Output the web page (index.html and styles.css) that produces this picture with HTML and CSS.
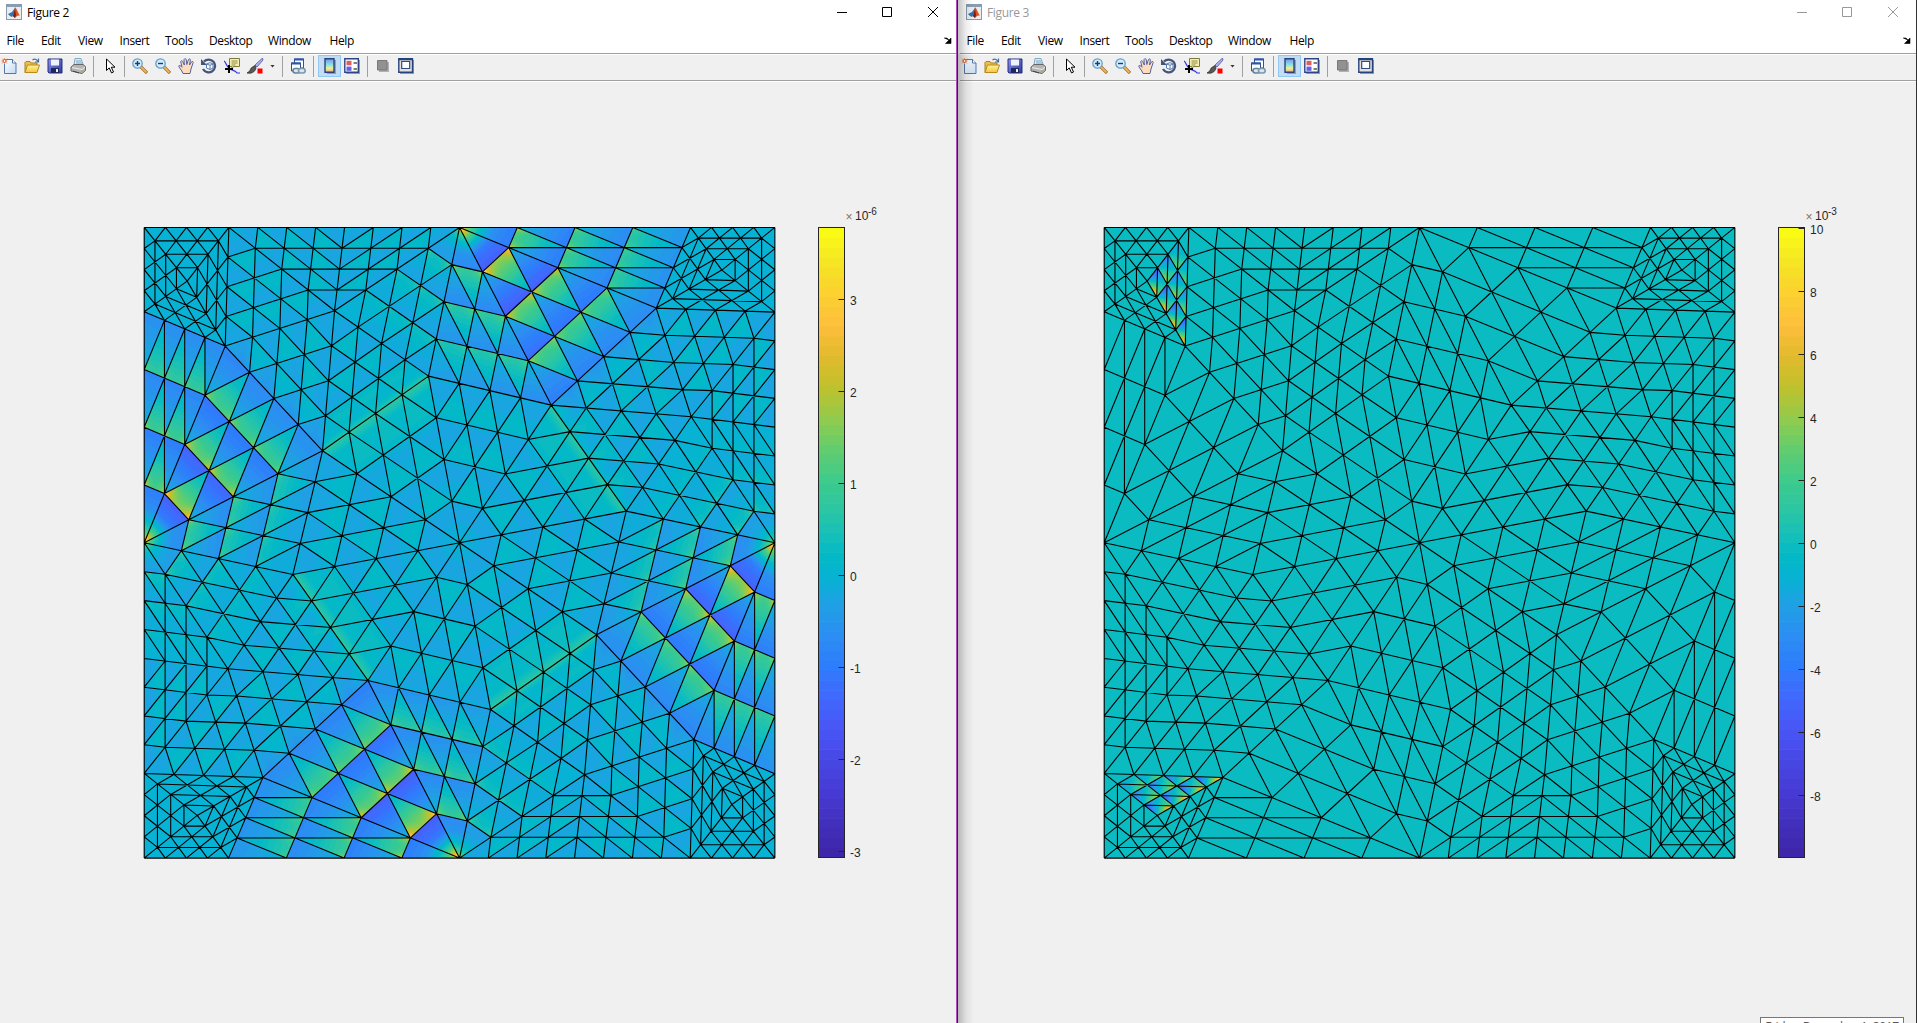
FILE: index.html
```html
<!DOCTYPE html>
<html lang="en">
<head>
<meta charset="utf-8">
<title>Figures</title>
<link rel="stylesheet" href="styles.css">
</head>
<body>
<svg class="defs" width="0" height="0">
<defs>
<linearGradient id="gPage" x1="0" y1="0" x2="1" y2="1"><stop offset="0" stop-color="#fff"/><stop offset="1" stop-color="#c3dbf3"/></linearGradient>
<linearGradient id="gFold" x1="0" y1="0" x2="0" y2="1"><stop offset="0" stop-color="#fff2a0"/><stop offset="1" stop-color="#f2c53d"/></linearGradient>
<linearGradient id="gSave" x1="0" y1="0" x2="1" y2="1"><stop offset="0" stop-color="#8d95ee"/><stop offset="1" stop-color="#2c3798"/></linearGradient>
<linearGradient id="gMap" x1="0" y1="0" x2="0" y2="1"><stop offset="0" stop-color="#8290e8"/><stop offset=".4" stop-color="#7fdfe6"/><stop offset=".7" stop-color="#eef09a"/><stop offset="1" stop-color="#f3a487"/></linearGradient>
</defs>
<symbol id="logo" viewBox="0 0 16 16"><rect x=".5" y=".5" width="15" height="15" fill="#e9edf1" stroke="#8b99a8"/><path d="M1 2h14" stroke="#7fa0c0" stroke-width="2"/><path d="M2 10l4-2 3-4 1 2-4 7-2-1z" fill="#2f74b5"/><path d="M9 3c2 2 3 6 5 9-2-1-3 0-5 2-1-1-2-2-3-2 2-2 2-6 3-9z" fill="#d9541e"/><path d="M9 5l1 6-1 3-2-2z" fill="#7b1f14"/></symbol>
<symbol id="new" viewBox="0 0 16 16"><path d="M3.500 1.500h8l3.500 3.500v10.500H3.500z" fill="url(#gPage)" stroke="#5577a8"/><path d="M11.500 1.500V5H15" fill="#fff" stroke="#5577a8"/><path d="M1 .5l5 5M6 .5L1 5.500M3.500 0v6M.5 3h6" stroke="#f09a66" stroke-width="1"/><circle cx="3.500" cy="3" r="1.500" fill="#fff" stroke="#d9532c"/></symbol>
<symbol id="open" viewBox="0 0 16 16"><path d="M1 14.500V4.500l1-1h4l1 1.500h6v2" fill="#e8c04b" stroke="#ad821c"/><path d="M1 14.500l2.500-7.500h12l-2.500 7.500z" fill="url(#gFold)" stroke="#b88a18"/><path d="M8.500 2c2-1.500 4-1 5.500 1.500M14.500.5v3.500h-3.500" fill="none" stroke="#466f9c" stroke-width="1.200"/></symbol>
<symbol id="save" viewBox="0 0 16 16"><path d="M1 1h14v14H2l-1-1z" fill="url(#gSave)" stroke="#27317d"/><path d="M4 1.500h8v6H4z" fill="#eef1ff"/><path d="M4 10h8v5H4z" fill="#1e265f"/><path d="M9 11h2v3H9z" fill="#eee"/></symbol>
<symbol id="print" viewBox="0 0 16 16"><path d="M4 7L5 .5h6l2 6" fill="#d7ebfa" stroke="#86a8bd"/><path d="M6 3h5M6 5h6" stroke="#79a9c7"/><path d="M1 9l3-2.500h9l2.500 2v4L12 15.500 1 13z" fill="#b5b5b5" stroke="#686868"/><path d="M2 9.500l10 2 3-2.500" fill="none" stroke="#eee"/><path d="M3 13l6 2" stroke="#444"/><path d="M11 13h2" stroke="#b7a13d"/></symbol>
<symbol id="cursor" viewBox="0 0 12 16"><path d="M1.500 1v11.500l2.700-2.600 2.300 5 2-.9-2.200-4.800H10z" fill="#fff" stroke="#000"/></symbol>
<symbol id="zin" viewBox="0 0 16 16"><path d="M9 9l6 6" stroke="#9b6a2c" stroke-width="3.200"/><path d="M9 9l5.500 5.500" stroke="#f0b354" stroke-width="1.800"/><circle cx="5.500" cy="5.500" r="4.700" fill="#cfeefc" stroke="#6d9bc4" stroke-width="1.300"/><path d="M3 5.500h5M5.500 3v5" stroke="#1b3c7a" stroke-width="1.400"/></symbol>
<symbol id="zout" viewBox="0 0 16 16"><path d="M9 9l6 6" stroke="#9b6a2c" stroke-width="3.200"/><path d="M9 9l5.500 5.500" stroke="#f0b354" stroke-width="1.800"/><circle cx="5.500" cy="5.500" r="4.700" fill="#cfeefc" stroke="#6d9bc4" stroke-width="1.300"/><path d="M3 5.500h5" stroke="#1b3c7a" stroke-width="1.400"/></symbol>
<symbol id="pan" viewBox="0 0 16 16"><path d="M5 15.500C4 12 .5 9.500.8 7.800c1-1 2.200.4 3.200 1.400L2.700 3.500c.7-1.300 1.700-.8 2 0L6.300 7 6 1.500c.7-1.200 1.900-1 2.200 0l.6 5L10.500 1.500c.8-1 1.800-.6 1.900.3L11.500 7l2-3.200c.9-.8 1.800-.2 1.700.7L13 11l-1 4.500z" fill="#ffdcbe" stroke="#40549b" stroke-width=".9"/></symbol>
<symbol id="rot" viewBox="0 0 16 16"><path d="M3 3.500A6.400 6.400 0 1 1 2 11" fill="none" stroke="#44557b" stroke-width="2.300"/><path d="M0 1v6h6z" fill="#44557b"/><path d="M5.500 6L9 4.700l3 1.300v4L9 11.500 5.500 10zM5.500 6L9 7.300 12 6M9 7.300v4" fill="#fff" stroke="#5a78ac"/></symbol>
<symbol id="tip" viewBox="0 0 16 16"><path d="M0 3c2 1 2 5 5 7 3 3 6 2 8 5l3 0" fill="none" stroke="#3333e0" stroke-width="1.200"/><path d="M5.500.5h10v8h-6L8 11V8.500H5.500z" fill="#f3efad" stroke="#7e7a3c"/><path d="M7.500 3h6M7.500 5h6M7.500 7h4" stroke="#8e8a52"/><path d="M1 11h8M5 7v8" stroke="#000" stroke-width="2"/></symbol>
<symbol id="brush" viewBox="0 0 17 16"><path d="M15.500 0L8 7l2 2 6-7z" fill="#aeb2f2" stroke="#4c54a0" stroke-width=".8"/><path d="M8 7.500L5.500 9C3 10 4 13 0 15c4 .8 8-.5 9-5z" fill="#5a5a55" stroke="#222" stroke-width=".7"/><path d="M10.500 10.500h5v5h-5z" fill="#f00"/></symbol>
<symbol id="link" viewBox="0 0 16 16"><path d="M4.500 1h9v9h-9z" fill="#fff" stroke="#334f8e"/><path d="M4 1.500h10" stroke="#2c55ad" stroke-width="2"/><path d="M1.500 5h9v8h-9z" fill="#fff" stroke="#334f8e"/><path d="M1 5.500h10" stroke="#2c55ad" stroke-width="2"/><rect x="3" y="10.500" width="7" height="4.500" rx="2.200" fill="#dbe6ee" stroke="#64809b" stroke-width="1.600"/><rect x="8.500" y="10.500" width="6.700" height="4.500" rx="2.200" fill="#dbe6ee" stroke="#7b97ae" stroke-width="1.600"/></symbol>
<symbol id="cbar" viewBox="0 0 12 16"><path d="M3 2h9v14H3z" fill="#8c9fb3"/><path d="M1 .8h9v13.500H1z" fill="url(#gMap)" stroke="#26437c" stroke-width="1.400"/></symbol>
<symbol id="legend" viewBox="0 0 16 16"><path d="M2 2h14v14H2z" fill="#8f9aa8"/><path d="M.8.8h13.500v13.500H.8z" fill="#fff" stroke="#2c4780" stroke-width="1.400"/><path d="M2.500 2.800h5v4.500h-5z" fill="#e45d5d"/><path d="M2.500 8.600h5v4.200h-5z" fill="#6262e6"/><path d="M9.500 5h3.500M9.500 11h3.500" stroke="#000" stroke-width="1.200"/></symbol>
<symbol id="hide" viewBox="0 0 12 12"><path d="M2 2h10v10H2z" fill="#b0b0b0"/><path d="M.5.5h9.500v9.500H.5z" fill="#919191" stroke="#787878"/></symbol>
<symbol id="dock" viewBox="0 0 16 16"><path d="M2 2h14v14H2z" fill="#8f9aa8"/><path d="M.8.8h13.700v13.500H.8z" fill="#e2e2da" stroke="#26437c" stroke-width="1.400"/><path d="M0 1.500h15" stroke="#26437c" stroke-width="1.600"/><path d="M3.700 3.500h8v7h-8z" fill="#fff" stroke="#2c4a88" stroke-width="1.200"/></symbol>
<symbol id="arrow" viewBox="0 0 8 7"><path d="M0 1h3l3 3M7 1v5.500H1.500L7 1z" fill="#000" stroke="#000" stroke-width=".6"/></symbol>
</svg>

<main class="desktop">
<section class="window active">
  <header class="title">
    <svg class="logo"><use href="#logo"/></svg><span class="caption">Figure 2</span>
    <svg class="controls" viewBox="0 0 102 12"><path d="M0 6.500h10M45.500 1.500h9v9h-9zM91 1l10 10M101 1L91 11"/></svg>
  </header>
  <nav class="menu"><span>File</span><span>Edit</span><span>View</span><span>Insert</span><span>Tools</span><span>Desktop</span><span>Window</span><span>Help</span><svg class="undock"><use href="#arrow"/></svg></nav>
  <div class="toolbar">
    <svg><use href="#new"/></svg><svg><use href="#open"/></svg><svg><use href="#save"/></svg><svg><use href="#print"/></svg><i class="sep"></i>
    <svg class="pick"><use href="#cursor"/></svg><i class="sep"></i>
    <svg><use href="#zin"/></svg><svg><use href="#zout"/></svg><svg><use href="#pan"/></svg><svg><use href="#rot"/></svg><svg><use href="#tip"/></svg><svg class="brush"><use href="#brush"/></svg><b class="drop"></b><i class="sep"></i>
    <svg><use href="#link"/></svg><i class="sep"></i>
    <span class="pressed"><svg><use href="#cbar"/></svg></span><svg><use href="#legend"/></svg><i class="sep"></i>
    <svg class="hide"><use href="#hide"/></svg><svg><use href="#dock"/></svg>
  </div>
  <div class="figure">
    <canvas class="plot" id="plot2" width="636" height="636"></canvas>
    <svg class="scale" id="scale2" width="80" height="670"></svg>
  </div>
</section>

<section class="window inactive">
  <header class="title">
    <svg class="logo"><use href="#logo"/></svg><span class="caption">Figure 3</span>
    <svg class="controls" viewBox="0 0 102 12"><path d="M0 6.500h10M45.500 1.500h9v9h-9zM91 1l10 10M101 1L91 11"/></svg>
  </header>
  <nav class="menu"><span>File</span><span>Edit</span><span>View</span><span>Insert</span><span>Tools</span><span>Desktop</span><span>Window</span><span>Help</span><svg class="undock"><use href="#arrow"/></svg></nav>
  <div class="toolbar">
    <svg><use href="#new"/></svg><svg><use href="#open"/></svg><svg><use href="#save"/></svg><svg><use href="#print"/></svg><i class="sep"></i>
    <svg class="pick"><use href="#cursor"/></svg><i class="sep"></i>
    <svg><use href="#zin"/></svg><svg><use href="#zout"/></svg><svg><use href="#pan"/></svg><svg><use href="#rot"/></svg><svg><use href="#tip"/></svg><svg class="brush"><use href="#brush"/></svg><b class="drop"></b><i class="sep"></i>
    <svg><use href="#link"/></svg><i class="sep"></i>
    <span class="pressed"><svg><use href="#cbar"/></svg></span><svg><use href="#legend"/></svg><i class="sep"></i>
    <svg class="hide"><use href="#hide"/></svg><svg><use href="#dock"/></svg>
  </div>
  <div class="figure">
    <canvas class="plot" id="plot3" width="636" height="636"></canvas>
    <svg class="scale" id="scale3" width="80" height="670"></svg>
  </div>
  <div class="shade"></div>
</section>
<div class="tooltip">Friday, December 1, 2017</div>
</main>
<script src="mesh.js"></script>
</body>
</html>
```
FILE: styles.css
```css
* { box-sizing: border-box; }
body { margin: 0; background: #f0f0f0; overflow: hidden; font-family: "Open Sans", "Noto Sans", sans-serif; font-size: 12px; color: #000; }
.defs { position: absolute; }
.desktop { position: relative; display: grid; grid-template-columns: 958px 959px; width: 1917px; height: 1023px; overflow: hidden; }
.window { position: relative; display: flex; flex-direction: column; background: #f0f0f0; min-width: 0; }
.active { border-right: 1px solid #34243c; }
.active::after { content: ""; position: absolute; top: 0; bottom: 0; right: 0; width: 1px; background: #b04cc0; }
.inactive { padding-left: 2px; border-right: 1px solid #333; }
.inactive::before { content: ""; position: absolute; left: 0; top: 0; width: 2px; height: 53px; background: #fff; }
.title { display: flex; align-items: center; height: 27px; padding: 0 18px 3px 6px; background: #fff; }
.inactive .title { padding-right: 17px; }
.logo { width: 16px; height: 16px; }
.caption { margin-left: 5px; letter-spacing: -0.35px; }
.controls { width: 102px; height: 12px; margin-left: auto; fill: none; stroke: #000; stroke-width: 1; }
.inactive .caption { color: #999; }
.inactive .controls { stroke: #999; }
.menu { display: grid; grid-template-columns: 34.5px 37px 41.5px 45.500px 44px 59px 61.500px 1fr 8px; align-items: center; height: 26px; padding: 0 5px 0 6.500px; background: #fff; letter-spacing: -0.4px; }
.undock { width: 8px; height: 7px; }
.toolbar { display: flex; align-items: center; height: 28px; padding: 0 0 2px 1px; gap: 7px; border-top: 1px solid #a0a0a0; border-bottom: 1px solid #a0a0a0; box-shadow: inset 0 1px #fff, 0 1px #fff; }
.toolbar svg { width: 16px; height: 16px; flex: none; }
.toolbar .sep { width: 1px; height: 21px; flex: none; background: #a0a0a0; }
.toolbar .pick { width: 12px; margin: 0 0 0 4px; }
.toolbar .brush { width: 17px; }
.drop { width: 5px; height: 3px; background: #333; clip-path: polygon(0 0, 100% 0, 50% 100%); margin: 0 0 0 -1px; }
.pressed { display: flex; align-items: center; justify-content: center; width: 23px; height: 22px; margin: 0 -4px 0 -3px; background: #c2dcf3; border: 1px solid #90c8f6; }
.toolbar .pressed svg { width: 12px; }
.toolbar .hide { width: 12px; height: 12px; margin: 0 2px 0 2px; }
.figure { display: flex; align-items: flex-start; padding: 119px 0 0 142px; flex: 1; }
.plot { margin-top: 25px; width: 636px; height: 636px; }
.scale { margin-left: 38px; font-family: "Liberation Sans", Arial, sans-serif; font-size: 12px; fill: #262626; overflow: visible; }
.shade { position: absolute; left: 0; top: 0; bottom: 0; width: 16px; background: linear-gradient(90deg, rgba(0,0,0,.24), rgba(0,0,0,.07) 50%, transparent); pointer-events: none; }
.tooltip { position: absolute; left: 1760px; top: 1017px; width: 144px; height: 22px; border: 1px solid #767676; background: #fff; color: #575757; text-align: center; white-space: nowrap; line-height: 18px; letter-spacing: -0.35px; }
```
FILE: mesh.js
```js
// Colour map anchors: position, red, green, blue.
const MAP = [[0,62,38,168],[.1,71,58,213],[.2,72,86,246],[.25,66,103,253],[.3,46,124,252],[.35,44,141,242],[.4,32,160,228],[.44,8,177,214],[.47,0,184,202],[.5,13,190,190],[.55,42,197,165],[.6,61,203,140],[.65,97,205,112],[.7,145,203,77],[.75,190,193,44],[.8,226,186,44],[.85,254,190,60],[.9,252,208,48],[.95,245,228,37],[1,249,251,20]];
function color(t) {
  t = Math.floor(Math.max(0, Math.min(0.9999, t)) * 64) / 63;
  let i = 1;
  while (i < MAP.length - 1 && MAP[i][0] < t) i++;
  const a = MAP[i - 1], b = MAP[i], k = (t - a[0]) / (b[0] - a[0]);
  return [1, 2, 3].map(j => Math.round(a[j] + (b[j] - a[j]) * k));
}

// Coarse mesh vertices in thirds of a pixel; a trailing "_" is the point mirrored through M.
const V = {
  A:[12,22], B:[266,22], C:[613,22], P:[958,22], Q:[1651,22], R:[1904,22],
  S:[12,275], L:[12,968], c:[141,183], D:[255,378], E:[583,272], F:[547,692],
  G:[865,468], H:[1233,555], I:[1548,264], d:[1745,150], J:[1653,590],
  K:[1458,873], T:[1904,276], U:[1904,621], M:[958,968]
};
for (const k of Object.keys(V)) V[k + "_"] = [1916 - V[k][0], 1936 - V[k][1]];
V.M_ = V.M; V.X = V.L_; V.X_ = V.L;
const half = "A B c,A S c,S D c,B D c,B D E,B C E,C P E,L S D,D E F,L D F,E F G,P E G,P G H,P Q I,P H I,Q R d,R T d,I T d,Q I d,I T J,H I J,J T U,X J U,H J K,X J K,M F G,M G H,M H K,M K F_,X K F_".split(",").map(s => s.split(" "));
const flip = n => n.endsWith("_") ? n.slice(0, -1) : n + "_";
const coarse = half.map(n => ({ n, key: n.join("") })).concat(half.map(n => ({ n: n.map(flip), key: n.join("") + "'" })));
const N = 4, OFFX = 2, OFFY = 5;
const px = p => [p[0] / 3 - OFFX + 0.2, p[1] / 3 - OFFY + 0.1];

// Wave strength in the triangles that touch a source: [gain, strength at 2nd vertex, at 3rd vertex].
const WAVE = { LDF:[.98,.75,.55], LSD:[.6,.55,.65], PHI:[1,.85,.6], PQI:[.62,.45,.6], PGH:[.45,.3,.65], PEG:[.22,.05,.3], LKF:[.45,.15,.45], LJK:[.22,.05,.15], LJU:[.2,.05,.1] };

// Position inside one cell of a subdivided triangle.
function cell(l) {
  const i = l.map(v => Math.min(3, Math.floor(4 * v)));
  const up = i[0] + i[1] + i[2] >= 3;
  return { up, i, r: l.map((v, k) => up ? 4 * v - i[k] : 1 - (4 * v - i[k])) };
}

function field2(tri, l) {
  const pair = tri.n.map(n => n.replace("_", "").replace("X", "L")).join("");
  const f = 4 * l[0] - Math.floor(Math.min(4 * l[0], 3.9999));
  const w = WAVE[pair], c = cell(l);
  if (w) {
    const near = l.reduce((s, v) => s + (4 * v - Math.round(4 * v)) ** 2, 0);
    const a = w[1] * l[1] + w[2] * l[2] + 1.9 * w[0] * l[0];
    // Cells pointing at the source fall off to blue, the cells between them rise to green.
    if (c.up && l[0] < .75) return .05 - a * 1.15 * (1 - f);
    const top = c.up ? Math.max(0, f - .35) * 1.5 : f;
    const kick = (.35 + 2.1 * l[0]) * Math.sqrt(w[0]) * Math.exp(-Math.sqrt(near) / .2) * (f > .5 ? 1 : 0);
    const dip = c.up ? .9 * a * (1 - f) : 0;
    return -.05 * (1 - f) + a * 1.08 * top + kick - dip;
  }
  if (/[cd]/.test(pair)) return -.04;
  let v = (c.up ? -.3 : .2) * (1 - Math.abs(c.r[0] - .3)) ** 2 + .02;
  if (pair === "MFG" || pair === "MHK") v += .7 * Math.exp(-l[0] * 8) * (c.up ? 1.3 : .6);
  if (pair === "EFG") v += .55 * Math.exp(-l[0] * 9) * (c.up ? 1.4 : .6);
  if (pair === "HJK") v += .35 * Math.exp(-l[1] * 12);
  if (pair === "HIJ") v -= .3 * Math.exp(-l[2] * 10);
  if (pair === "DEF") v -= .3 * Math.exp(-l[1] * 10);
  return v;
}

function field3(tri, l) {
  if (tri.key !== "BDc" && tri.key !== "ITd'") return 0;
  const top = tri.key === "BDc", c = cell(l);
  const start = top ? l[0] : l[1];
  if (start > .75) return 0;
  const [lo, hi] = top ? [c.r[0], c.r[1]] : [c.r[1], c.r[0]];
  const k = (c.up ? 3.5 + 7 * (1 - start) ** 3 : 4.2) * Math.min(1, (.85 - start) * 3.5);
  return k * (c.up ? hi - lo : lo - hi);
}

function draw(id, field, lo, hi) {
  const ctx = document.getElementById(id).getContext("2d");
  const img = ctx.createImageData(636, 636);
  for (const tri of coarse) {
    const [a, b, c] = tri.n.map(n => px(V[n]));
    const det = (b[1] - c[1]) * (a[0] - c[0]) + (c[0] - b[0]) * (a[1] - c[1]);
    const xs = [a[0], b[0], c[0]], ys = [a[1], b[1], c[1]];
    for (let y = Math.floor(Math.min(...ys)); y <= Math.max(...ys); y++)
      for (let x = Math.floor(Math.min(...xs)); x <= Math.max(...xs); x++) {
        const X = x + .5, Y = y + .5;
        const l0 = ((b[1] - c[1]) * (X - c[0]) + (c[0] - b[0]) * (Y - c[1])) / det;
        const l1 = ((c[1] - a[1]) * (X - c[0]) + (a[0] - c[0]) * (Y - c[1])) / det;
        const l2 = 1 - l0 - l1;
        if (l0 < -.004 || l1 < -.004 || l2 < -.004) continue;
        const l = [l0, l1, l2].map(v => Math.max(0, v));
        const rgb = color((field(tri, l) - lo) / (hi - lo));
        img.data.set([...rgb, 255], (y * 636 + x) * 4);
      }
  }
  ctx.putImageData(img, 0, 0);
  ctx.strokeStyle = "#000";
  ctx.lineWidth = 1.1;
  const seen = new Set();
  ctx.beginPath();
  for (const tri of coarse) {
    const p = tri.n.map(n => px(V[n]));
    const at = (i, j) => [0, 1].map(k => (p[0][k] * i + p[1][k] * j + p[2][k] * (N - i - j)) / N);
    const line = (s, e) => {
      const key = [s, e].map(q => q.map(v => v.toFixed(1)).join()).sort().join("|");
      if (seen.has(key)) return;
      seen.add(key);
      ctx.moveTo(...s); ctx.lineTo(...e);
    };
    for (let k = 0; k < N; k++) {
      line(at(k, 0), at(k, N - k));
      line(at(0, k), at(N - k, k));
      line(at(0, N - k), at(N - k, 0));
    }
  }
  ctx.stroke();
}

function scale(id, lo, hi, ticks, exp) {
  const top = 27.5, h = 630, w = 26;
  let s = "";
  for (let i = 0; i < 64; i++) {
    const y = top + h * (63 - i) / 64;
    s += `<rect x="2.500" y="${y}" width="${w}" height="${Math.min(h / 64 + .6, top + h - y)}" fill="rgb(${color((i + .5) / 64)})"/>`;
  }
  s += `<rect x="2.500" y="${top}" width="${w}" height="${h}" fill="none" stroke="#262626"/>`;
  for (const t of ticks) {
    const y = Math.round(top + h * (hi - t) / (hi - lo)) - .5;
    s += `<path d="M22.500 ${y}h6" stroke="#262626"/><text x="34" y="${y + 5}">${t}</text>`;
  }
  s += `<text x="29.500" y="21" fill="#777">×</text><text x="39" y="20">10</text><text x="52" y="14.500" font-size="10">${exp}</text>`;
  document.getElementById(id).innerHTML = s;
}
draw("plot2", field2, -3.06, 3.79);
draw("plot3", field3, -9.94, 10.05);
scale("scale2", -3.06, 3.79, [3, 2, 1, 0, -1, -2, -3], "-6");
scale("scale3", -9.94, 10.05, [10, 8, 6, 4, 2, 0, -2, -4, -6, -8], "-3");
```
